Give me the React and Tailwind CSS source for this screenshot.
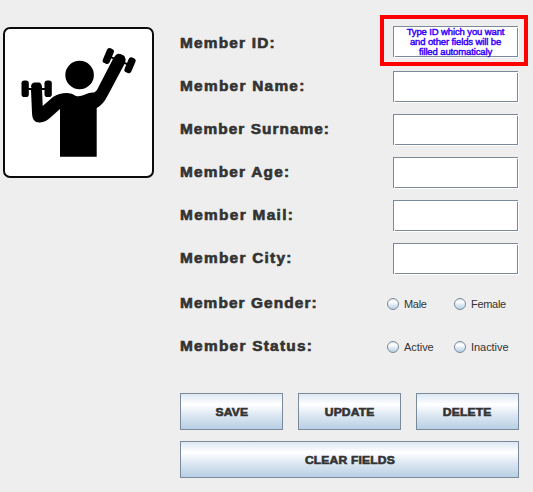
const heavy = "font-['Liberation_Sans',sans-serif] font-bold text-[#333333]";

const fields = [
  { label: 'Member ID:', spacing: 'tracking-[1.1px]' },
  { label: 'Member Name:', spacing: 'tracking-[1.15px]' },
  { label: 'Member Surname:', spacing: 'tracking-[0.95px]' },
  { label: 'Member Age:', spacing: 'tracking-[1.1px]' },
  { label: 'Member Mail:', spacing: 'tracking-[1.2px]' },
  { label: 'Member City:', spacing: 'tracking-[1.15px]' },
];

const choices = [
  { label: 'Member Gender:', labelSpacing: 'tracking-[1px]', options: ['Male', 'Female'], spacing: 'tracking-[-0.3px]' },
  { label: 'Member Status:', labelSpacing: 'tracking-[1.15px]', options: ['Active', 'Inactive'], spacing: 'tracking-[-0.05px]' },
];

function Label({ children, spacing }) {
  return (
    <span className="w-[207px] whitespace-nowrap">
      <span className={`${heavy} ${spacing} inline-block origin-left scale-x-[1.1] align-top text-[14px] leading-[18px] [-webkit-text-stroke:0.6px_#333333]`}>
        {children}
      </span>
    </span>
  );
}

function TextField({ children }) {
  return (
    <div className="relative ml-[6px] h-[31px] w-[125px] border border-[#7a8a99] bg-white shadow-[1px_1px_0_#ffffff] before:absolute before:-bottom-px before:left-0 before:size-px before:bg-white after:absolute after:-right-px after:top-0 after:size-px after:bg-white">
      {children}
    </div>
  );
}

function Radio({ text, spacing }) {
  return (
    <label className="flex h-[18px] w-[67px] items-center">
      <span className="size-3 shrink-0 rounded-full border border-[#7a8a99] bg-[linear-gradient(#dde8f3,#ffffff_30%,#dde8f3_60%,#b8cfe5)]" />
      <span className={`ml-[5px] font-['Liberation_Sans',sans-serif] text-[11px] leading-[14px] text-[#333333] ${spacing}`}>{text}</span>
    </label>
  );
}

function Button({ children }) {
  return (
    <button className="flex h-[37px] flex-1 items-center justify-center border border-[#7a8a99] bg-[linear-gradient(#dde8f3,#ffffff_30%,#dde8f3_60%,#b8cfe5)]">
      <span className={`${heavy} scale-x-[1.1] whitespace-nowrap text-[11px] leading-[14px] tracking-[0.15px] [-webkit-text-stroke:0.6px_#333333]`}>
        {children}
      </span>
    </button>
  );
}

function Athlete() {
  return (
    <svg viewBox="0 0 151 151" className="h-[151px] w-[151px]" fill="#000">
      <circle cx="76.6" cy="48" r="14.3" />
      <path d="M28 63 Q28 57 34 56 Q39 57 39 62 L39.7 79 L50 70 Q56 66 64 66 Q69 66 73 69 Q77 70 82 67.500 Q87 65 91 65.500 Q94 64 96 59 L110 32 Q113 26 118 27.500 Q124 29 122 36 L105 68 Q100 78 93.700 81 L93.700 129.700 L57 129.700 L57 82 L48 90 Q43 95 37 95.500 Q29 96 29 86 Z" />
      <g>
        <rect x="18.500" y="53.500" width="7.300" height="16.500" rx="2.800" />
        <rect x="41.500" y="53.500" width="7.300" height="16.500" rx="2.800" />
        <path d="M24 61 H43 V63 H24Z" />
        <path d="M28 60 Q28 55.500 32 55.500 H36 Q39 56 39 61Z" />
      </g>
      <g transform="translate(116 33.600) rotate(23)">
        <rect x="-15.300" y="-8" width="7.300" height="16" rx="2.800" />
        <rect x="8.300" y="-8" width="7.300" height="16" rx="2.800" />
        <path d="M-9 -1 H9 V1 H-9Z" />
        <path d="M-5.500 1 Q-6 -6.500 -1 -6.500 H2 Q6 -6 6 1Z" />
      </g>
    </svg>
  );
}

export default function App() {
  return (
    <main className="flex h-[492px] w-[533px] overflow-hidden bg-[#eeeeee]">
      <aside className="ml-[3px] mt-[27px] flex size-[151px] shrink-0 items-center justify-center rounded-[7px] border-2 border-[#0b0b0b] bg-white">
        <div className="-m-[2px]">
          <Athlete />
        </div>
      </aside>
      <form className="ml-[26px] flex w-[348px] shrink-0 flex-col pt-[15px]">
        <div className="flex h-[51px]">
          <div className="flex w-[200px] pt-[19px]">
            <Label spacing={fields[0].spacing}>{fields[0].label}</Label>
          </div>
          <div className="h-[51px] w-[148px] border-4 border-[#ff0000] pl-[3px] pt-[7px]">
            <TextField>
              <p className="whitespace-nowrap text-center font-['Liberation_Sans',sans-serif] text-[9.5px] leading-[10px] tracking-[-0.12px] text-[#3300ff] [-webkit-text-stroke:0.45px_#3300ff]">
                Type ID which you want
                <br />
                and other fields will be
                <br />
                filled automaticaly
              </p>
            </TextField>
          </div>
        </div>
        <div className="mt-[5px] flex flex-col gap-3">
          {fields.slice(1).map((field) => (
            <div key={field.label} className="flex h-[31px]">
              <div className="flex pt-[6px]">
                <Label spacing={field.spacing}>{field.label}</Label>
              </div>
              <TextField />
            </div>
          ))}
        </div>
        <div className="mt-[21px] flex flex-col gap-[25px]">
          {choices.map((choice) => (
            <div key={choice.label} className="flex h-[18px]">
              <div className="-mt-[1px] flex">
                <Label spacing={choice.labelSpacing}>{choice.label}</Label>
              </div>
              {choice.options.map((option) => (
                <Radio key={option} text={option} spacing={choice.spacing} />
              ))}
            </div>
          ))}
        </div>
        <div className="mt-[37px] flex w-[339px] gap-[15px]">
          <Button>SAVE</Button>
          <Button>UPDATE</Button>
          <Button>DELETE</Button>
        </div>
        <div className="mt-[11px] flex w-[339px]">
          <Button>CLEAR FIELDS</Button>
        </div>
      </form>
    </main>
  );
}
